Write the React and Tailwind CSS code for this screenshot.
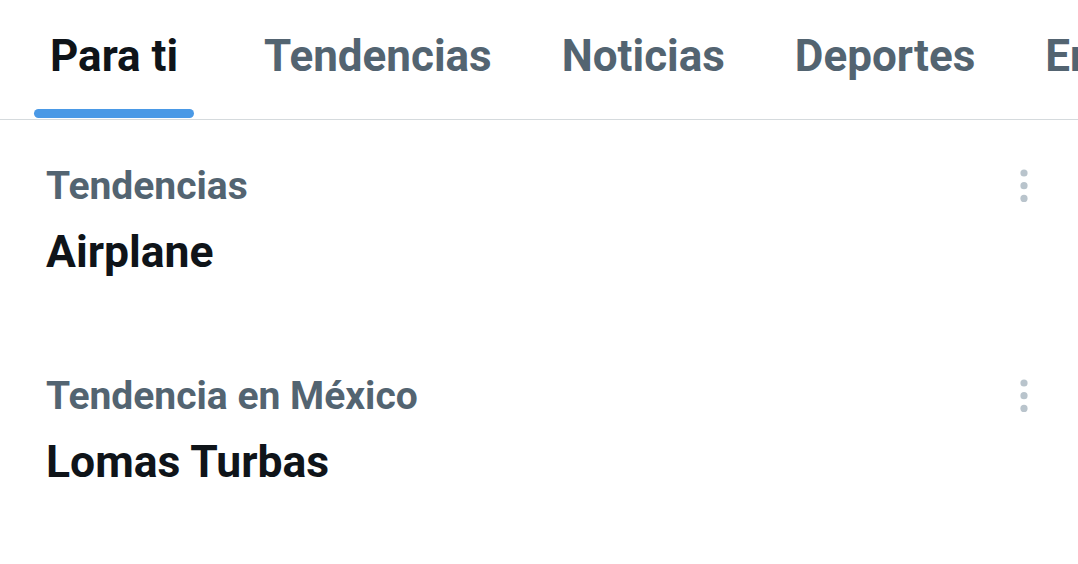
import React from 'react';

const tabs = ['Para ti', 'Tendencias', 'Noticias', 'Deportes', 'Entretenimiento'];

const trends = [
  { label: 'Tendencias', name: 'Airplane' },
  { label: 'Tendencia en México', name: 'Lomas Turbas' },
];

const MoreDots = () => (
  <svg width="10" height="36" viewBox="0 0 10 36" className="shrink-0 mt-[7px]">
    <circle cx="5" cy="4" r="3.6" fill="#b9c4cc" />
    <circle cx="5" cy="16.7" r="3.6" fill="#b9c4cc" />
    <circle cx="5" cy="29.4" r="3.6" fill="#b9c4cc" />
  </svg>
);

const App = () => {
  return (
    <div
      className="w-[1078px] h-[564px] overflow-hidden bg-white"
      style={{ fontFamily: 'Roboto, "Liberation Sans", sans-serif' }}
    >
      {/* tab bar */}
      <div className="flex h-[120px] border-b border-[#d5dadd] whitespace-nowrap overflow-hidden">
        {tabs.map((tab, index) => (
          <div
            key={tab}
            className={index === 0 ? 'pl-[34px] pr-[35px] shrink-0' : 'px-[35px] shrink-0'}
          >
            <span className={`relative block h-full pt-[30px] ${index === 0 ? 'px-[16px]' : ''}`}>
              <span
                className={`block text-[44px] leading-[52px] font-bold ${
                  index === 0 ? 'text-[#0f1419]' : 'text-[#536471]'
                }`}
              >
                {tab}
              </span>
              {index === 0 && (
                <span className="absolute left-0 right-0 bottom-[1px] h-[9px] rounded-full bg-[#4a99e6]" />
              )}
            </span>
          </div>
        ))}
      </div>

      {/* trends */}
      {trends.map((trend) => (
        <div key={trend.name} className="flex justify-between pl-[46px] pr-[49px] pt-[42px] pb-[50px]">
          <div>
            <div className="text-[39px] leading-[48px] font-bold text-[#536471]">{trend.label}</div>
            <div className="mt-[14px] text-[44.5px] leading-[56px] font-bold text-[#0f1419]">{trend.name}</div>
          </div>
          <MoreDots />
        </div>
      ))}
    </div>
  );
};

export default App;
